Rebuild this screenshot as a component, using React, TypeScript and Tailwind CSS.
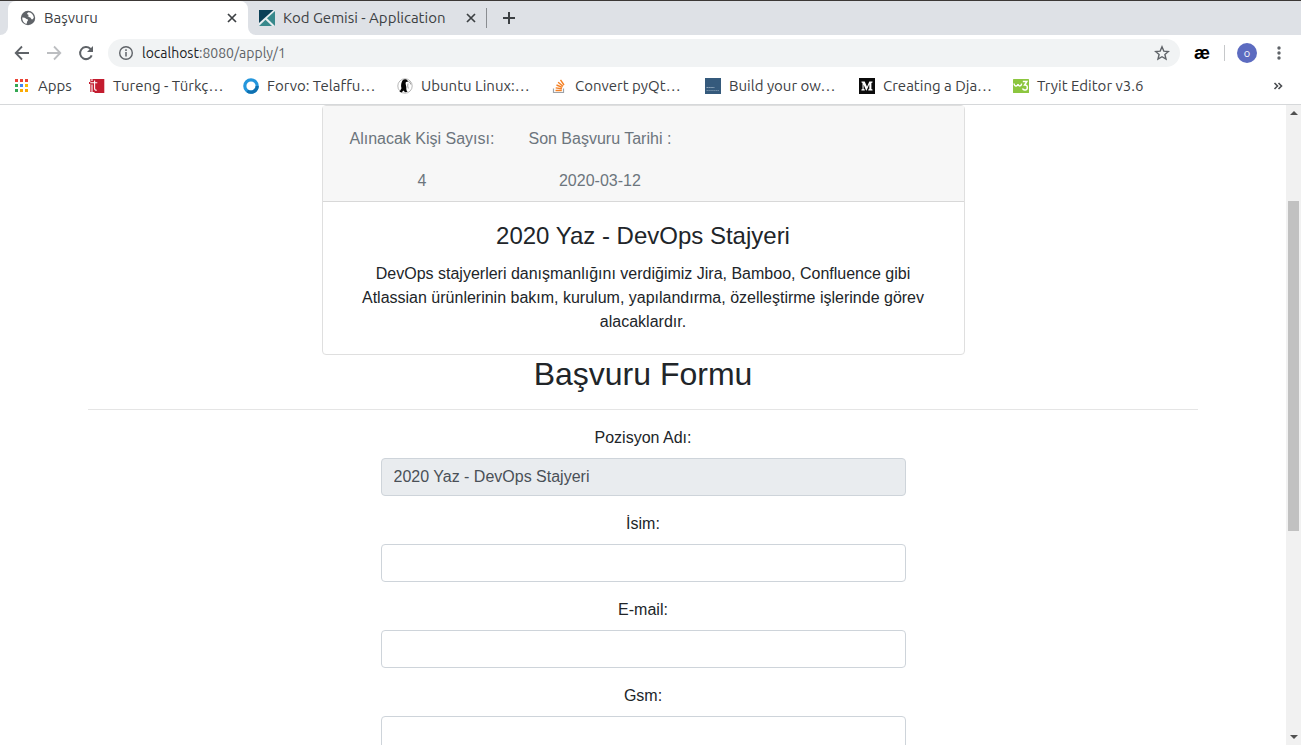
import type { ReactNode } from 'react';

const uiFont = "font-['Ubuntu','Open_Sans','Noto_Sans',sans-serif]";

function GlobeIcon() {
  return (
    <svg className="size-4 shrink-0" viewBox="0 0 16 16" aria-hidden="true">
      <circle cx="8" cy="8" r="7.2" fill="#5f6368" />
      <path d="M2.2 7.6c1.5-.3 2.800.2 3.700 1 .8.800 1.900.400 2.100 1.400.1.900-1 1.200-1 2.200 0 .7-.3 1.400-.8 1.700C3.600 13.100 2 10.500 2.200 7.600z" fill="#fff" />
      <path d="M8.800 2.200c-.9.300-1.900.9-1.700 1.700.2.700 1.300.3 1.500 1 .2.800-1 .9-.8 1.700.3.900 1.700.4 2.500.9.800.6.700 1.700 1.600 1.900.9.100 1.500-.8 1.900-1.900C13.600 4.800 11.400 2.600 8.800 2.200z" fill="#fff" />
    </svg>
  );
}

function KodGemisiIcon() {
  return (
    <svg className="size-4 shrink-0" viewBox="0 0 16 16" aria-hidden="true">
      <rect width="16" height="16" fill="#e8eef0" />
      <path d="M0 0h14.500L0 13z" fill="#0b4057" />
      <path d="M16 1v15L8 8.300z" fill="#38898c" />
      <path d="M6.500 9.800 13 16H0z" fill="#38898c" />
    </svg>
  );
}

function CloseIcon() {
  return (
    <svg className="size-4" viewBox="0 0 16 16" aria-hidden="true">
      <path d="m4 4 8 8M12 4l-8 8" stroke="#3c4043" strokeWidth="1.700" />
    </svg>
  );
}

function AppsIcon() {
  const colors = ['#ea4335', '#ea4335', '#ea4335', '#34a853', '#4285f4', '#fbbc05', '#34a853', '#fbab05', '#fbab05'];
  return (
    <svg className="size-4 shrink-0" viewBox="0 0 16 16" aria-hidden="true">
      {colors.map((c, i) => (
        <rect key={i} x={1 + (i % 3) * 5} y={1 + Math.floor(i / 3) * 5} width="3" height="3" fill={c} />
      ))}
    </svg>
  );
}

function TurengIcon() {
  return (
    <svg className="size-4 shrink-0" viewBox="0 0 16 16" aria-hidden="true">
      <path d="M0 4h1.300V1h14v14H5.500v-1H1.300V6H0z" fill="#c31c2f" />
      <path d="M1.300 4.700h7M5.600 2.500v8q0 1.800 2.200 1.800M3 6.500V14" stroke="#fff" strokeWidth="1.100" fill="none" />
      <rect x="2.200" y="1.300" width="1.500" height="1.500" fill="#fff" />
    </svg>
  );
}

function ForvoIcon() {
  return (
    <svg className="size-4 shrink-0" viewBox="0 0 16 16" aria-hidden="true">
      <circle cx="8" cy="8" r="6.200" fill="none" stroke="#2496dc" strokeWidth="3.200" />
      <path d="M14.200 8a6.200 6.200 0 0 1-9.800 5" fill="none" stroke="#0e70b0" strokeWidth="3.200" />
    </svg>
  );
}

function PenguinIcon() {
  return (
    <svg className="size-4 shrink-0" viewBox="0 0 16 16" aria-hidden="true">
      <circle cx="8" cy="8" r="7.200" fill="#fff" stroke="#999" strokeWidth=".7" />
      <path d="M4.800 4C5.200 2 6.800.9 8.500 1.200c1.300.2 1.900 1 2.800 2.300L9 4c-1 1.200.1 2.800.3 5 .1 2.200-.3 3.200 1.300 4.800l-2.600.4-1.500-1.700L4.500 14.500l-2-.8 2-3.500C3.800 8.500 4 6 4.800 4z" fill="#050505" />
      <path d="M11.300 3.500q2.500.7 2.500 3M11 5.500q-.8 2.500.3 5" stroke="#888" strokeWidth=".8" fill="none" />
    </svg>
  );
}

function StackIcon() {
  return (
    <svg className="size-4 shrink-0" viewBox="0 0 16 16" aria-hidden="true">
      <path d="M2.500 10.500v4h10v-4" fill="none" stroke="#9da2a8" strokeWidth="1.200" />
      <path d="M4.500 12.500h6.300M4.700 9.900l6.200.8M5.500 7l5.800 2.400M7.100 4.200l4.900 4M9.500 1.800l3.500 5.200" stroke="#f48024" strokeWidth="1.400" />
    </svg>
  );
}

function BuildIcon() {
  return (
    <svg className="size-4 shrink-0" viewBox="0 0 16 16" aria-hidden="true">
      <rect width="16" height="16" fill="#355a7c" />
      <path d="M1.500 9.500h8" stroke="#a9bccd" strokeWidth=".8" strokeDasharray="1.500 .4" />
      <path d="M1.500 12.500h12.500" stroke="#8099b1" strokeWidth=".8" strokeDasharray="1.500 .4" />
    </svg>
  );
}

function MediumIcon() {
  return (
    <svg className="size-4 shrink-0" viewBox="0 0 16 16" aria-hidden="true">
      <rect width="16" height="16" fill="#0b0b0b" />
      <path d="M2.500 3.500h3.200L8 8.800l2.300-5.300h3.200v.9l-1.100.6v6l1.100.6v.9H9.300v-.9l1-.6V6.300L7.600 12.500h-.5L4.600 6.600v4.300l1.200.7v.9H2.400v-.9l1.100-.7V5l-1-.6z" fill="#fff" />
    </svg>
  );
}

function W3Icon() {
  return (
    <svg className="size-4 shrink-0" viewBox="0 0 16 16" aria-hidden="true">
      <rect y="1" width="16" height="14" rx=".6" fill="#8cc63f" />
      <path d="M1 5.500q.3 2.500 2 2.500T5 6q.3 2 1.800 2t1.900-2.300" fill="none" stroke="#fff" strokeWidth="1.400" />
      <path d="M9.800 3.600h4L11.600 7q2.700-.2 2.700 2.500T11.800 12q-1.700 0-2.300-1.500" fill="none" stroke="#fff" strokeWidth="1.500" />
    </svg>
  );
}

function Bookmark({ icon, children }: { icon: ReactNode; children: ReactNode }) {
  return (
    <a href="#" className="flex w-[154px] shrink-0 items-center gap-2 whitespace-nowrap">
      {icon}
      {children}
    </a>
  );
}

function TabStrip() {
  return (
    <div className="flex h-[35px] items-stretch border-t border-[#3c3836] bg-[#dee1e6]">
      <div className="w-2 bg-white">
        <div className="h-full rounded-br-lg bg-[#dee1e6]" />
      </div>
      <div className="flex w-60 items-center gap-2 rounded-t-lg bg-white pr-2 pl-3">
        <GlobeIcon />
        <span className="grow">Başvuru</span>
        <button type="button" aria-label="Close tab"><CloseIcon /></button>
      </div>
      <div className="bg-white">
        <div className="flex h-full w-[238px] items-center gap-2 rounded-bl-lg bg-[#dee1e6] pr-[7px] pl-[11px] whitespace-nowrap">
          <KodGemisiIcon />
          <span className="grow">Kod Gemisi - Application</span>
          <button type="button" aria-label="Close tab"><CloseIcon /></button>
        </div>
      </div>
      <div className="h-5 w-px self-center bg-[#8a8d91]" />
      <button type="button" aria-label="New tab" className="ml-3 self-center">
        <svg className="size-5" viewBox="0 0 20 20" aria-hidden="true">
          <path d="M10 4v12M4 10h12" stroke="#3c4043" strokeWidth="2" />
        </svg>
      </button>
    </div>
  );
}

function Toolbar() {
  return (
    <div className="flex h-9 items-center bg-white px-3 text-sm">
      <div className="flex gap-3">
        <button type="button" aria-label="Back">
          <svg className="size-5" viewBox="0 0 20 20" aria-hidden="true">
            <path d="M17 10H4M10 3.500 3.700 10l6.300 6.500" fill="none" stroke="#5f6368" strokeWidth="1.800" />
          </svg>
        </button>
        <button type="button" aria-label="Forward" disabled>
          <svg className="size-5" viewBox="0 0 20 20" aria-hidden="true">
            <path d="M3 10h13M10 3.500l6.300 6.500-6.300 6.500" fill="none" stroke="#bcbec1" strokeWidth="1.800" />
          </svg>
        </button>
        <button type="button" aria-label="Reload">
          <svg className="size-5" viewBox="0 0 20 20" aria-hidden="true">
            <path d="M15.700 12.300A6 6 0 1 1 14.300 5.800L16 7.500" fill="none" stroke="#5f6368" strokeWidth="2" />
            <path d="M17 3v6h-6z" fill="#5f6368" />
          </svg>
        </button>
      </div>
      <div className="ml-3 flex h-7 grow items-center rounded-full bg-[#f1f3f4] px-2.5">
        <svg className="size-4" viewBox="0 0 16 16" aria-hidden="true">
          <circle cx="8" cy="8" r="6.300" fill="none" stroke="#5f6368" strokeWidth="1.400" />
          <path d="M8 7v4.500M8 4.300v1.600" stroke="#5f6368" strokeWidth="1.500" />
        </svg>
        <span className="ml-2 grow text-[#5f6368]">
          <span className="text-[#202124]">localhost</span>:8080/apply/1
        </span>
        <button type="button" aria-label="Bookmark this page">
          <svg className="size-4" viewBox="0 0 16 16" aria-hidden="true">
            <path d="m8 1.800 1.800 4.300 4.600.4-3.500 3 1.100 4.600L8 11.700l-4 2.400 1.100-4.600-3.500-3 4.600-.4z" fill="none" stroke="#5f6368" strokeWidth="1.400" />
          </svg>
        </button>
      </div>
      <button type="button" aria-label="Extension" className="w-11 text-center font-['Liberation_Sans',sans-serif] text-lg leading-5 font-bold text-black">æ</button>
      <div className="h-4 w-px bg-[#c6c8ca]" />
      <button type="button" aria-label="Profile" className="ml-3 size-5 rounded-full bg-[#5c6bc0] text-center text-[11px] leading-5 text-white">o</button>
      <button type="button" aria-label="Menu" className="ml-3">
        <svg className="size-5" viewBox="0 0 20 20" fill="#5f6368" aria-hidden="true">
          <circle cx="10" cy="5" r="1.700" />
          <circle cx="10" cy="10" r="1.700" />
          <circle cx="10" cy="15" r="1.700" />
        </svg>
      </button>
    </div>
  );
}

function BookmarksBar() {
  return (
    <nav aria-label="Bookmarks" className="flex h-[34px] items-center border-b border-[#d6d8da] bg-white pr-[15px] pb-1 pl-[14px]">
      <a href="#" className="flex w-[75px] shrink-0 items-center gap-2">
        <AppsIcon />
        Apps
      </a>
      <Bookmark icon={<TurengIcon />}>Tureng - Türkç…</Bookmark>
      <Bookmark icon={<ForvoIcon />}>Forvo: Telaffu…</Bookmark>
      <Bookmark icon={<PenguinIcon />}>Ubuntu Linux:…</Bookmark>
      <Bookmark icon={<StackIcon />}>Convert pyQt…</Bookmark>
      <Bookmark icon={<BuildIcon />}>Build your ow…</Bookmark>
      <Bookmark icon={<MediumIcon />}>Creating a Dja…</Bookmark>
      <Bookmark icon={<W3Icon />}>Tryit Editor v3.6</Bookmark>
      <button type="button" aria-label="More bookmarks" className="ml-auto">
        <svg className="size-4" viewBox="0 0 16 16" aria-hidden="true">
          <path d="m4.500 5 3 3-3 3M8.500 5l3 3-3 3" fill="none" stroke="#4a4d51" strokeWidth="1.600" />
        </svg>
      </button>
    </nav>
  );
}

function Field({ id, label, value, disabled }: { id: string; label: string; value?: string; disabled?: boolean }) {
  return (
    <div className="mb-4">
      <label htmlFor={id} className="mb-2 block text-center">{label}</label>
      <input
        id={id}
        type="text"
        defaultValue={value}
        disabled={disabled}
        className="block h-[38px] w-full rounded border border-[#ced4da] bg-white px-3 text-[#495057] disabled:bg-[#e9ecef]"
      />
    </div>
  );
}

function Scrollbar() {
  return (
    <div aria-hidden="true" className="flex w-[15px] shrink-0 flex-col items-center bg-[#f1f1f1] py-1.5">
      <svg className="h-1 w-2" viewBox="0 0 8 4"><path d="M0 4 4 0l4 4z" fill="#505050" /></svg>
      <div className="grow-86" />
      <div className="w-[11px] grow-330 bg-[#c1c1c1]" />
      <div className="grow-204" />
      <svg className="h-1 w-2" viewBox="0 0 8 4"><path d="M0 0h8L4 4z" fill="#505050" /></svg>
    </div>
  );
}

export default function App() {
  return (
    <div className="flex h-screen flex-col overflow-hidden bg-white">
      <header className={`shrink-0 text-[15px] leading-5 text-[#3c4043] ${uiFont}`}>
        <TabStrip />
        <Toolbar />
        <BookmarksBar />
      </header>
      <div className="flex min-h-0 grow">
        <main className="min-w-0 grow overflow-hidden font-['Liberation_Sans',Arial,sans-serif] text-base leading-6 text-[#212529]">
          <section className="mx-auto w-1/2 rounded border border-[#dfdfdf] text-center">
            <div className="border-b border-[#d8d8d8] bg-[#f7f7f7] pt-[11px] pl-[9px]">
              <table className="border-separate border-spacing-0.5 text-[#6c757d]">
                <thead>
                  <tr>
                    <th className="px-4 py-2 font-normal">Alınacak Kişi Sayısı:</th>
                    <th className="px-4 py-2 font-normal">Son Başvuru Tarihi :</th>
                  </tr>
                </thead>
                <tbody>
                  <tr>
                    <td className="px-4 pt-2 pb-1.5">4</td>
                    <td className="px-4 pt-2 pb-1.5">2020-03-12</td>
                  </tr>
                </tbody>
              </table>
            </div>
            <div className="p-5">
              <h2 className="mb-3 text-2xl leading-7">2020 Yaz - DevOps Stajyeri</h2>
              <p>
                DevOps stajyerleri danışmanlığını verdiğimiz Jira, Bamboo, Confluence gibi Atlassian ürünlerinin
                bakım, kurulum, yapılandırma, özelleştirme işlerinde görev alacaklardır.
              </p>
            </div>
          </section>
          <div className="mx-auto max-w-[1140px] px-[15px]">
            <h1 className="text-center text-[32px] leading-[38px]">Başvuru Formu</h1>
            <hr className="my-4 border-[#e5e5e5]" />
            <form className="mx-auto w-1/2 px-[15px]">
              <Field id="position" label="Pozisyon Adı:" value="2020 Yaz - DevOps Stajyeri" disabled />
              <Field id="name" label="İsim:" />
              <Field id="email" label="E-mail:" />
              <Field id="gsm" label="Gsm:" />
            </form>
          </div>
        </main>
        <Scrollbar />
      </div>
    </div>
  );
}
